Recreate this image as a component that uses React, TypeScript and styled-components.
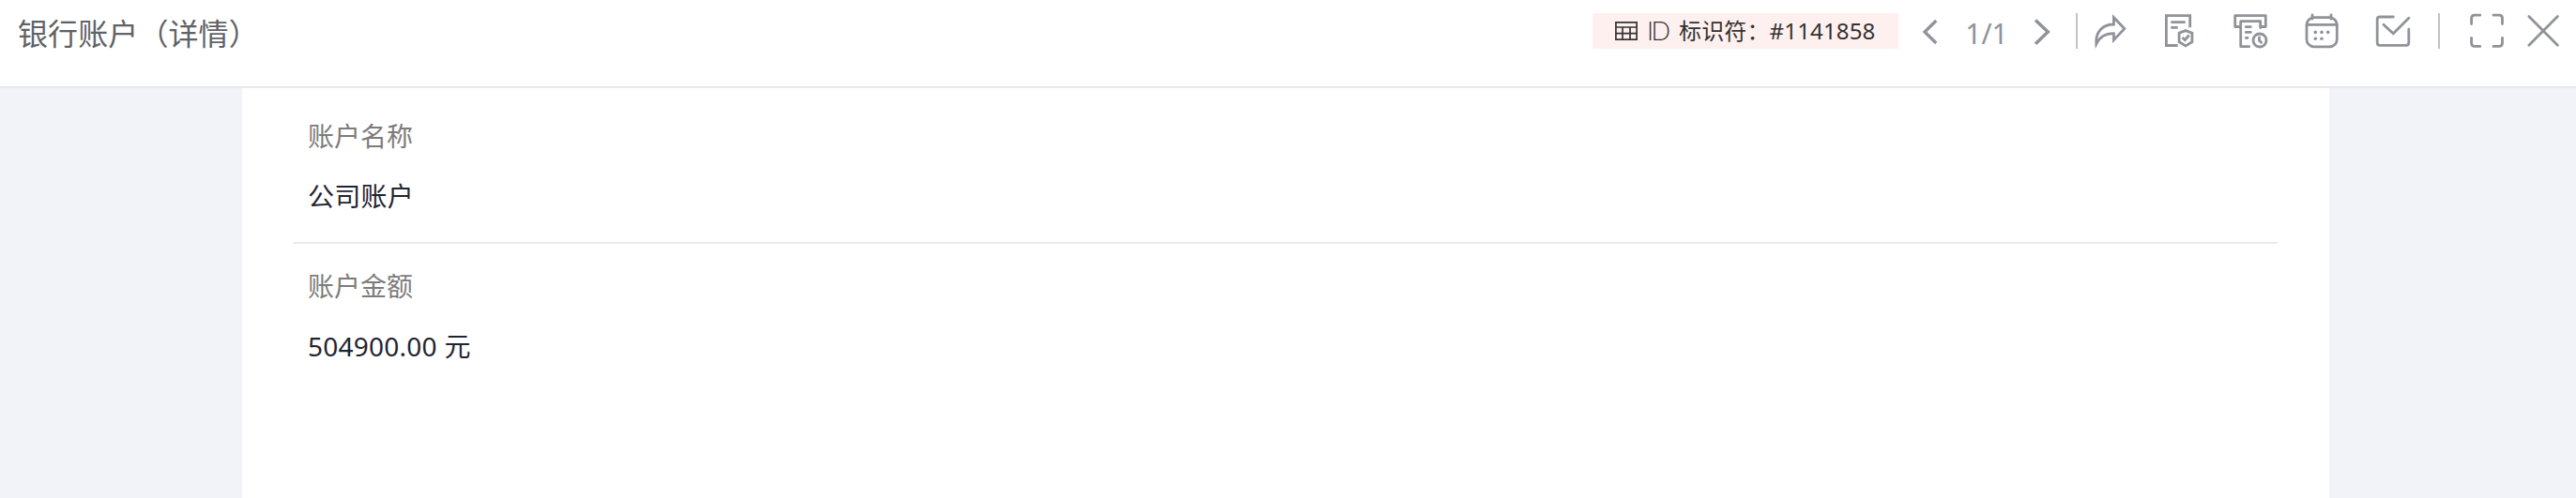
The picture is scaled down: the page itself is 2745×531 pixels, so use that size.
import React from 'react';

import styled, {createGlobalStyle} from 'styled-components';

const GlobalStyle = createGlobalStyle`
  * {
    box-sizing: border-box;
  }
  body {
    margin: 0;
    background-color: #f2f3f8;
    font-family: 'Noto Sans', 'Noto Sans CJK SC', sans-serif;
  }
`;

const Page = styled.div`
  height: 100vh;
  display: flex;
  overflow: hidden;
  flex-direction: column;
`;

const Header = styled.header`
  height: 94px;
  display: flex;
  flex-shrink: 0;
  align-items: flex-start;
  justify-content: space-between;
  padding: 14px 17px 0 19px;
  background-color: #fff;
  border-bottom: 2px solid #e7e7e8;
`;

const Title = styled.h1`
  margin: 0;
  color: #606266;
  font-size: 32px;
  font-weight: 400;
  line-height: 40px;
  white-space: nowrap;
  letter-spacing: 0.1px;
  font-family: 'Noto Sans CJK SC', sans-serif;
`;

const Toolbar = styled.div`
  height: 38px;
  display: flex;
  align-items: center;
`;

const Tag = styled.div`
  width: 326px;
  height: 38px;
  display: flex;
  color: #333;
  font-size: 24px;
  line-height: 38px;
  padding-left: 24px;
  align-items: center;
  white-space: nowrap;
  background-color: #fff0f0;
`;

const TagMark = styled.span`
  width: 21px;
  font-size: 27px;
  font-weight: 300;
  margin: 0 12px 0 10px;
  letter-spacing: -2.5px;
  font-family: 'Lato', sans-serif;
`;

const TagText = styled.span`
  margin-left: 1px;
  letter-spacing: 0.15px;
`;

const Count = styled.span`
  width: 46px;
  color: #909399;
  font-size: 30px;
  margin: 6px 26px 0 28px;
  text-align: center;
  line-height: 38px;
`;

const Divider = styled.span<{$left: number; $right: number}>`
  width: 2px;
  height: 38px;
  margin: 0 ${({$right}) => $right}px 0 ${({$left}) => $left}px;
  background-color: #c3c3c5;
`;

const IconButton = styled.button<{$gap?: number}>`
  padding: 0;
  border: none;
  display: flex;
  cursor: pointer;
  color: #909399;
  background: none;
  margin-left: ${({$gap = 0}) => $gap}px;
`;

const Icon = styled.svg`
  fill: none;
  display: block;
  overflow: visible;
  stroke: currentColor;
  stroke-width: 2.8;
`;

const Body = styled.main`
  flex: 1;
  display: flex;
  padding: 0 263px 0 258px;
`;

const Card = styled.section`
  flex: 1;
  padding: 6px 55px 0 54px;
  background-color: #fff;
`;

const Field = styled.div<{$last?: boolean}>`
  height: 160px;
  padding: 25px 16px 0;
  border-bottom: 2px solid ${({$last}) => ($last ? 'transparent' : '#eaeaeb')};
`;

const Label = styled.div`
  color: #7c7c7c;
  font-size: 28px;
  line-height: 40px;
  margin-bottom: 24px;
`;

const Value = styled.div`
  color: #1f2533;
  font-size: 28px;
  line-height: 40px;
  letter-spacing: 0.25px;
`;

const fields = [
  {label: '账户名称', value: '公司账户'},
  {label: '账户金额', value: '504900.00 元'},
];

function App() {
  return (
    <Page>
      <GlobalStyle />
      <Header>
        <Title>银行账户（详情）</Title>
        <Toolbar>
          <Tag>
            <Icon width="24" height="20" viewBox="0 0 24 20">
              <path
                d="M.9 .9H23.1V19.1H.9Z M.9 6H23.1 M.9 12.7H23.1 M8 6V19 M16 6V19"
                strokeWidth="1.7"
              />
            </Icon>
            <TagMark>ID</TagMark>
            <TagText>标识符：#1141858</TagText>
          </Tag>

          <IconButton $gap={25}>
            <Icon width="18" height="38">
              <path d="M15.2 8 3 20 15.2 32" strokeWidth="3.3" />
            </Icon>
          </IconButton>
          <Count>1/1</Count>
          <IconButton>
            <Icon width="18" height="38">
              <path d="M3 7.5 16.3 20 3 32.8" strokeWidth="3.5" />
            </Icon>
          </IconButton>

          <Divider $left={28} $right={16} />

          <IconButton>
            <Icon width="36" height="38">
              <path d="M22.4 4.5 33.8 16.6 22.4 28.8V21.7C13 21.7 7.5 25 3.8 33 2.6 19.5 11 12 22.4 12Z" />
            </Icon>
          </IconButton>
          <IconButton $gap={38}>
            <Icon width="36" height="38">
              <path d="M16.7 34.5H4.4V2.6H29.7V15.3 M9.3 9.7H24.7 M9.3 15.3H16.7" />
              <path d="M25 18.6 31.9 21.2V30.6L25 34.9 18.1 30.6V21.2Z M21.5 26 24.3 28.7 28.7 23.5" />
            </Icon>
          </IconButton>
          <IconButton $gap={40}>
            <Icon width="36" height="38" strokeLinejoin="round" strokeLinecap="round">
              <path d="M6 14.5H1.7V2.7H34.3V14.5H30.5 M16.7 35.7H7.7V8.7H28.7V15.5" />
              <path d="M13.3 14.7H18.3 M13.3 20.4H18.3 M13.3 26.4H15" />
              <circle cx="28" cy="29" r="7" />
              <path d="M27.5 25.8V29.3L29.6 31.3" />
            </Icon>
          </IconButton>
          <IconButton $gap={40}>
            <Icon width="36" height="38" strokeLinecap="round">
              <rect x="2" y="4.7" width="32.3" height="31.2" rx="8" />
              <path d="M2 12.3H34.3 M8 2V6.2 M28 2V6.2" />
              <g fill="currentColor" stroke="none">
                <circle cx="11.3" cy="20.4" r="1.8" />
                <circle cx="18" cy="20.4" r="1.8" />
                <circle cx="24.7" cy="20.4" r="1.8" />
                <circle cx="11.3" cy="27.3" r="1.8" />
                <circle cx="18" cy="27.3" r="1.8" />
              </g>
            </Icon>
          </IconButton>
          <IconButton $gap={40}>
            <Icon width="36" height="38" strokeLinecap="round">
              <path d="M18.3 4H4Q1.2 4 1.2 6.8V31.5Q1.2 34.3 4 34.3H32Q34.8 34.3 34.8 31.5V17.2" />
              <path d="M8 12.3 18.3 21.7 34.8 5.2" />
            </Icon>
          </IconButton>

          <Divider $left={30} $right={32} />

          <IconButton>
            <Icon width="36" height="38" strokeLinecap="round">
              <path d="M1.6 11.5V5.5Q1.6 2.2 5 2.2H10.8 M25 2.2H31Q34.5 2.2 34.5 5.5V11.5 M1.6 26.3V32Q1.6 35.4 5 35.4H10.8 M25 35.4H31Q34.5 35.4 34.5 32V26.3" />
            </Icon>
          </IconButton>
          <IconButton $gap={24}>
            <Icon width="36" height="38" strokeLinecap="round">
              <path d="M2.8 3.6 33.4 34.3 M33.4 3.6 2.8 34.3" />
            </Icon>
          </IconButton>
        </Toolbar>
      </Header>

      <Body>
        <Card>
          {fields.map((field, index) => (
            <Field key={field.label} $last={index === fields.length - 1}>
              <Label>{field.label}</Label>
              <Value>{field.value}</Value>
            </Field>
          ))}
        </Card>
      </Body>
    </Page>
  );
}

export default App;
